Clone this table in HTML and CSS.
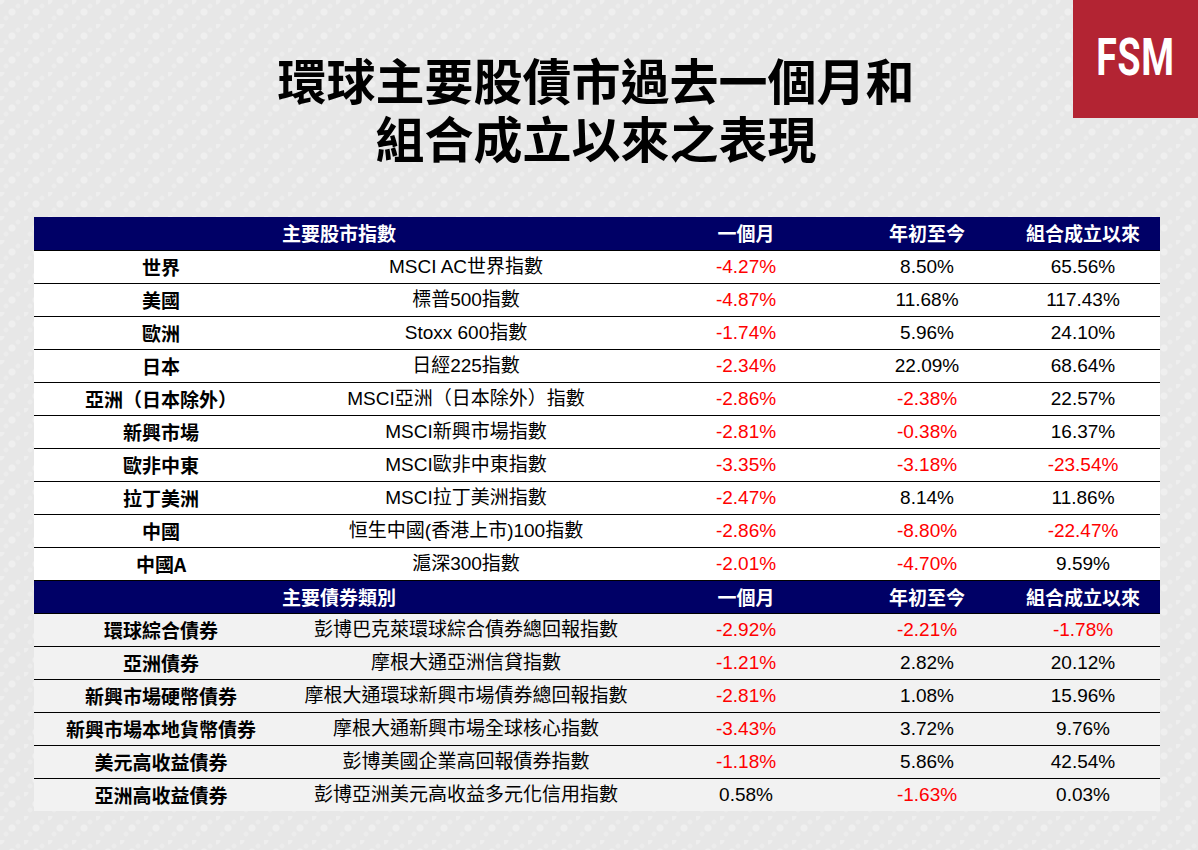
FILE: index.html
```html
<!DOCTYPE html>
<html lang="zh-Hant">
<head>
<meta charset="utf-8">
<title>環球主要股債市表現</title>
<link rel="stylesheet" href="styles.css">
</head>
<body>
<div class="page">
  <div class="logo"><span class="logo-text">FSM</span></div>
  <h1 class="title"><span class="tline">環球主要股債市過去一個月和</span><span class="tline">組合成立以來之表現</span></h1>
  <table class="perf">
    <colgroup>
      <col class="c1"><col class="c2"><col class="c3"><col class="c4"><col class="c5">
    </colgroup>
    <tbody>
      <tr class="head"><th colspan="2">主要股市指數</th><th>一個月</th><th>年初至今</th><th>組合成立以來</th></tr>
      <tr class="eq"><td class="name">世界</td><td>MSCI AC世界指數</td><td class="neg">-4.27%</td><td>8.50%</td><td>65.56%</td></tr>
      <tr class="eq"><td class="name">美國</td><td>標普500指數</td><td class="neg">-4.87%</td><td>11.68%</td><td>117.43%</td></tr>
      <tr class="eq"><td class="name">歐洲</td><td>Stoxx 600指數</td><td class="neg">-1.74%</td><td>5.96%</td><td>24.10%</td></tr>
      <tr class="eq"><td class="name">日本</td><td>日經225指數</td><td class="neg">-2.34%</td><td>22.09%</td><td>68.64%</td></tr>
      <tr class="eq"><td class="name">亞洲（日本除外）</td><td>MSCI亞洲（日本除外）指數</td><td class="neg">-2.86%</td><td class="neg">-2.38%</td><td>22.57%</td></tr>
      <tr class="eq"><td class="name">新興市場</td><td>MSCI新興市場指數</td><td class="neg">-2.81%</td><td class="neg">-0.38%</td><td>16.37%</td></tr>
      <tr class="eq"><td class="name">歐非中東</td><td>MSCI歐非中東指數</td><td class="neg">-3.35%</td><td class="neg">-3.18%</td><td class="neg">-23.54%</td></tr>
      <tr class="eq"><td class="name">拉丁美洲</td><td>MSCI拉丁美洲指數</td><td class="neg">-2.47%</td><td>8.14%</td><td>11.86%</td></tr>
      <tr class="eq"><td class="name">中國</td><td>恒生中國(香港上市)100指數</td><td class="neg">-2.86%</td><td class="neg">-8.80%</td><td class="neg">-22.47%</td></tr>
      <tr class="eq"><td class="name">中國A</td><td>滬深300指數</td><td class="neg">-2.01%</td><td class="neg">-4.70%</td><td>9.59%</td></tr>
      <tr class="head"><th colspan="2">主要債券類別</th><th>一個月</th><th>年初至今</th><th>組合成立以來</th></tr>
      <tr class="bd"><td class="name">環球綜合債券</td><td>彭博巴克萊環球綜合債券總回報指數</td><td class="neg">-2.92%</td><td class="neg">-2.21%</td><td class="neg">-1.78%</td></tr>
      <tr class="bd"><td class="name">亞洲債券</td><td>摩根大通亞洲信貸指數</td><td class="neg">-1.21%</td><td>2.82%</td><td>20.12%</td></tr>
      <tr class="bd"><td class="name">新興市場硬幣債券</td><td>摩根大通環球新興市場債券總回報指數</td><td class="neg">-2.81%</td><td>1.08%</td><td>15.96%</td></tr>
      <tr class="bd"><td class="name">新興市場本地貨幣債券</td><td>摩根大通新興市場全球核心指數</td><td class="neg">-3.43%</td><td>3.72%</td><td>9.76%</td></tr>
      <tr class="bd"><td class="name">美元高收益債券</td><td>彭博美國企業高回報債券指數</td><td class="neg">-1.18%</td><td>5.86%</td><td>42.54%</td></tr>
      <tr class="bd last"><td class="name">亞洲高收益債券</td><td>彭博亞洲美元高收益多元化信用指數</td><td>0.58%</td><td class="neg">-1.63%</td><td>0.03%</td></tr>
    </tbody>
  </table>
</div>
</body>
</html>
```

FILE: styles.css
```css
html, body {
  margin: 0;
  padding: 0;
}
body {
  width: 1198px;
  height: 850px;
  overflow: hidden;
  background-color: #e7e7e7;
  background-image:
    radial-gradient(circle at 50% 50%, rgba(255,255,255,0.35) 0 3px, transparent 4px),
    radial-gradient(circle at 0 0, rgba(255,255,255,0.3) 0 4px, transparent 5px),
    radial-gradient(circle at 25% 75%, rgba(255,255,255,0.2) 0 2px, transparent 3px),
    radial-gradient(circle at 75% 25%, rgba(255,255,255,0.2) 0 2px, transparent 3px);
  background-size: 24px 24px;
  font-family: "Liberation Sans", Arial, "Noto Sans CJK TC", sans-serif;
  color: #000;
}
.page {
  position: relative;
  width: 1198px;
  height: 850px;
  padding-top: 54px;
  box-sizing: border-box;
}
.logo {
  position: absolute;
  top: 0;
  right: 0;
  width: 125px;
  height: 118px;
  background: #b32433;
  display: flex;
  align-items: center;
  justify-content: center;
}
.logo-text {
  display: inline-block;
  font-family: Roboto, "Liberation Sans", sans-serif;
  font-weight: 700;
  font-size: 52px;
  line-height: 1;
  color: #fff;
  transform: scaleX(0.72);
  letter-spacing: 1px;
  margin-top: -2px;
}
.title {
  margin: 0;
  text-align: center;
  font-family: "Liberation Sans", "Noto Sans CJK TC", sans-serif;
  font-weight: 700;
  font-size: 49px;
  color: #000;
  padding-right: 6px;
}
.tline {
  display: block;
  height: 58px;
  line-height: 58px;
}
.perf {
  margin: 47px 0 0 34px;
  width: 1126px;
  border-collapse: collapse;
  table-layout: fixed;
  font-size: 19px;
}
.c1 { width: 254px; }
.c2 { width: 356px; }
.c3 { width: 204px; }
.c4 { width: 158px; }
.c5 { width: 154px; }
.perf tr {
  height: 33px;
}
.perf td, .perf th {
  padding: 0;
  height: 32px;
  text-align: center;
  vertical-align: middle;
  border-bottom: 1px solid #000;
  white-space: nowrap;
  font-family: "Liberation Sans", Arial, "Noto Sans CJK TC", sans-serif;
  line-height: 32px;
}
.perf tr.last td {
  border-bottom: none;
}
.head th {
  background: #000066;
  color: #fff;
  font-weight: 700;
  font-family: "Noto Sans CJK TC", sans-serif;
}
.eq td { background: #fff; }
.bd td { background: #f2f2f2; }
.perf td.name {
  font-family: "Noto Sans CJK TC", sans-serif;
  font-weight: 700;
}
.perf td.neg {
  color: #ff0000;
}
```
